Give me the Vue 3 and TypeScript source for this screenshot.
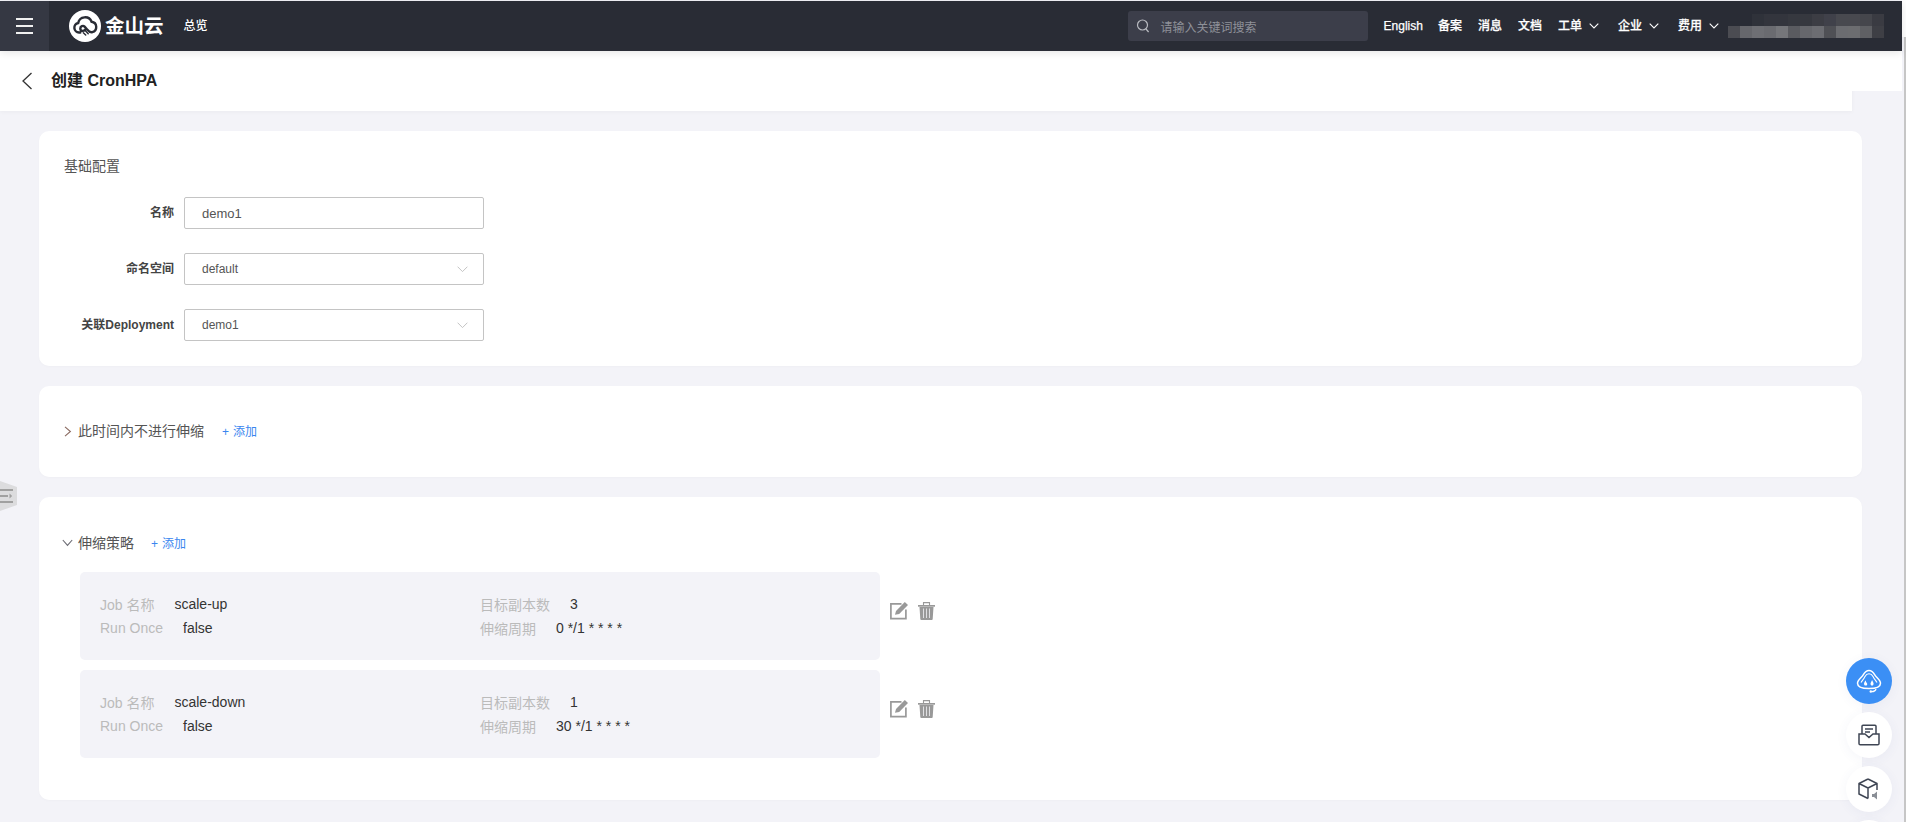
<script setup lang="ts">
interface Field { label: string; value: string; select: boolean }
interface Job { name: string; replicas: string; once: string; cron: string }

const navPlain: string[] = ['English', '备案', '消息', '文档']
const navMenu: string[] = ['工单', '企业', '费用']
const fields: Field[] = [
  { label: '名称', value: 'demo1', select: false },
  { label: '命名空间', value: 'default', select: true },
  { label: '关联Deployment', value: 'demo1', select: true },
]
const jobs: Job[] = [
  { name: 'scale-up', replicas: '3', once: 'false', cron: '0 */1 * * * *' },
  { name: 'scale-down', replicas: '1', once: 'false', cron: '30 */1 * * * *' },
]
const topCells = ['#2f323a', '#33353d', '#33353d', '#36383f', '#36383f', '#3c3d44', '#40414a', '#48494f', '#48494f', '#45464c', '#3a3b42']
const bottomCells = ['#4b4c52', '#66676c', '#6e6f74', '#6a6b70', '#75767a', '#5a5b60', '#66676c', '#6c6d72', '#4f5055', '#6b6c70', '#6c6d70', '#5f6064', '#3e3f45', '#3b3c42']
</script>

<template>
  <div class="app">
    <div class="main">
      <header class="topbar">
        <button class="menu-btn" aria-label="menu">
          <span></span><span></span><span></span>
        </button>
        <div class="logo">
          <svg class="logo-mark" width="32" height="32" viewBox="0 0 32 32">
            <circle cx="16" cy="16" r="16" fill="#fff" />
            <path d="M11.300 22.500H10a4.800 4.800 0 0 1-.8-9.500 7 7 0 0 1 13.400-1.200 5.300 5.300 0 0 1 .6 10.400c-2.400.4-3.800-1.200-5.300-3l-2.300-2.600c-1.500-1.500-4.300-.4-4.300 1.800 0 1.400 1.100 2.500 2.400 2.500 1.100 0 1.900-.6 2.600-1.300" fill="none" stroke="#292c35" stroke-width="2.400" stroke-linecap="round" />
            <path d="M16.200 20.500l3 3.200M14.300 22.800l2.400 2.200" fill="none" stroke="#292c35" stroke-width="1.500" stroke-linecap="round" />
          </svg>
          <span class="logo-text">金山云</span>
        </div>
        <a class="overview">总览</a>
        <div class="spacer"></div>
        <div class="search">
          <svg width="14" height="16" viewBox="0 0 14 16">
            <circle cx="6.500" cy="7" r="5" fill="none" stroke="#b8bac0" stroke-width="1.200" />
            <path d="M10 11l2.600 3" fill="none" stroke="#b8bac0" stroke-width="1.200" />
          </svg>
          <span>请输入关键词搜索</span>
        </div>
        <nav class="nav">
          <a v-for="item in navPlain" :key="item" class="nav-item">{{ item }}</a>
          <a v-for="item in navMenu" :key="item" class="nav-item nav-menu">
            {{ item }}
            <svg width="10" height="6" viewBox="0 0 10 6"><path d="M.7.7L5 5l4.300-4.300" fill="none" stroke="#fff" stroke-width="1.100" /></svg>
          </a>
        </nav>
        <svg class="mosaic" width="156" height="24" viewBox="0 0 156 24">
          <rect v-for="(c, i) in topCells" :key="'t' + i" :x="24 + i * 12" y="0" width="12.500" height="12" :fill="c" />
          <rect v-for="(c, i) in bottomCells" :key="'b' + i" :x="i * 12" y="12" width="12.500" height="12" :fill="c" />
        </svg>
      </header>

      <div class="title-wrap">
        <div class="title-bar">
          <svg class="back" width="12" height="18" viewBox="0 0 12 18"><path d="M9.500 1L1 9l8.500 8" fill="none" stroke="#333" stroke-width="1.300" /></svg>
          <h1>创建 CronHPA</h1>
        </div>
        <div class="title-stub"></div>
      </div>

      <main class="content">
        <section class="card card-basic">
          <h2 class="section-title">基础配置</h2>
          <div class="form">
            <div v-for="f in fields" :key="f.label" class="form-row">
              <label>{{ f.label }}</label>
              <div class="control" :class="{ plain: !f.select }">
                <span>{{ f.value }}</span>
                <svg v-if="f.select" width="11" height="7" viewBox="0 0 11 7"><path d="M.6.7l4.900 4.900L10.400.7" fill="none" stroke="#c4c4c4" stroke-width="1" /></svg>
              </div>
            </div>
          </div>
        </section>

        <section class="card card-fold">
          <div class="fold-head">
            <svg class="fold-icon" width="8" height="11" viewBox="0 0 8 11"><path d="M1 .8l5.400 4.700L1 10.200" fill="none" stroke="#8a6a60" stroke-width="1.100" /></svg>
            <span class="fold-title">此时间内不进行伸缩</span>
            <a class="add add-long"><i>+</i>添加</a>
          </div>
        </section>

        <section class="card card-policy">
          <div class="fold-head">
            <svg class="fold-icon open" width="11" height="8" viewBox="0 0 11 8"><path d="M.8 1l4.700 5.400L10.200 1" fill="none" stroke="#6a6a72" stroke-width="1.100" /></svg>
            <span class="fold-title">伸缩策略</span>
            <a class="add"><i>+</i>添加</a>
          </div>
          <div class="jobs">
            <div v-for="job in jobs" :key="job.name" class="job-line">
              <div class="job">
                <div class="pair"><span class="k">Job 名称</span><span class="v">{{ job.name }}</span></div>
                <div class="pair"><span class="k">目标副本数</span><span class="v">{{ job.replicas }}</span></div>
                <div class="pair"><span class="k">Run Once</span><span class="v">{{ job.once }}</span></div>
                <div class="pair"><span class="k">伸缩周期</span><span class="v">{{ job.cron }}</span></div>
              </div>
              <div class="actions">
                <svg width="18" height="18" viewBox="0 0 18 18">
                  <path d="M11.500 1.800H.9v14.800h15V7.500" fill="none" stroke="#999" stroke-width="1.700" />
                  <path d="M5 12.800l1-3.800L14.800 0 18 3l-8.800 9z" fill="#999" />
                </svg>
                <svg width="17" height="18" viewBox="0 0 17 18">
                  <path d="M5.500 3.200V.6h6v2.600" fill="none" stroke="#999" stroke-width="1.100" />
                  <path d="M0 3h17v1.700H0z" fill="#999" />
                  <path d="M1.500 5h14l-.8 12a1 1 0 0 1-1 1H3.300a1 1 0 0 1-1-1z" fill="#999" />
                  <path d="M5.500 6.500v9.500M8.500 6.500v9.500M11.500 6.500v9.500" stroke="#dfdfe2" stroke-width="1" />
                </svg>
              </div>
            </div>
          </div>
        </section>
      </main>
    </div>
    <div class="scroll"><div class="thumb"></div></div>

    <div class="side-handle">
      <svg width="14" height="16" viewBox="0 0 14 16">
        <path d="M0 2h13M0 8h8M0 14h13" stroke="#a0a0a0" stroke-width="2" />
        <path d="M9.500 5.500l2.700 2.500-2.700 2.500z" fill="#a0a0a0" />
      </svg>
    </div>

    <div class="floats">
      <a class="float blue">
        <svg width="26" height="24" viewBox="0 0 26 24">
          <path d="M13 1.500c2.800 0 4.400 1.900 5.800 4.400 1.500 2.600 5.700 5.300 5.700 8.300 0 3.600-4.400 5.300-11.500 5.300S1.500 17.800 1.500 14.200c0-3 4.200-5.700 5.700-8.300C8.600 3.400 10.200 1.500 13 1.500z" fill="none" stroke="#fff" stroke-width="1.500" />
          <path d="M5 13.500c1.300-2 3-3.800 4-6 .8-1.500 2-2.700 4-2.700s3.200 1.200 4 2.700c1 2.200 2.700 4 4 6" fill="none" stroke="#fff" stroke-width="1.100" />
          <path d="M8.800 16.500c-1-.9-1-2.400-.2-3.500l.9-1.800.6 1.800 1 1.500c.4 1-.1 1.700-.7 2zM15.300 16.500c-1-.9-1-2.400-.2-3.500l1-2 .9 2c.8 1.100.8 2.600-.2 3.500z" fill="#fff" />
          <path d="M20 20c-.4 1.700-2 2.600-4.500 2.600" fill="none" stroke="#fff" stroke-width="1.300" />
          <circle cx="14.800" cy="22.500" r="1.200" fill="#fff" />
        </svg>
      </a>
      <a class="float">
        <svg width="22" height="22" viewBox="0 0 22 22">
          <path d="M4 10V2.200a1 1 0 0 1 1-1h12a1 1 0 0 1 1 1V10" fill="none" stroke="#3f4654" stroke-width="1.500" />
          <path d="M7 5h8M7 8h5" stroke="#3f4654" stroke-width="1.400" />
          <path d="M1 10h6l4 3.500 4-3.500h6v9.500a1.300 1.300 0 0 1-1.300 1.300H2.300A1.300 1.300 0 0 1 1 19.500z" fill="none" stroke="#3f4654" stroke-width="1.500" />
        </svg>
      </a>
      <a class="float">
        <svg width="22" height="22" viewBox="0 0 22 22">
          <path d="M10 1L1 5.500V16l9 4.500M10 1l9 4.500V12M1 5.500L10 10l9-4.500M10 10v10.500" fill="none" stroke="#3f4654" stroke-width="1.500" stroke-linejoin="round" />
          <path d="M14 16h2l3-2.500v8L16 19h-2z" fill="#8a8e96" />
        </svg>
      </a>
      <a class="float"></a>
    </div>
  </div>
</template>

<style>
html, body { margin: 0; background: #f3f3f8; overflow: hidden; }
</style>

<style scoped>
.app {
  position: relative;
  display: flex;
  width: 1906px;
  height: 822px;
  overflow: hidden;
  background: #f3f3f8;
  font-family: "Liberation Sans", "Noto Sans CJK SC", sans-serif;
  color: #333;
}
.main { width: 1902px; flex: none; display: flex; flex-direction: column; }
.scroll { width: 4px; flex: none; background: linear-gradient(#fff 37px, #f3f3f8 37px); }
.thumb { margin: 37px 0 0 2px; width: 2px; height: 785px; background: #c6c6c6; }

.topbar {
  position: relative;
  z-index: 2;
  margin-top: 1px;
  height: 50px;
  flex: none;
  display: flex;
  align-items: center;
  background: #292c35;
  color: #fff;
  box-shadow: 0 2px 8px rgba(0, 0, 0, .1);
}
.menu-btn {
  width: 49px;
  height: 50px;
  padding: 0;
  border: 0;
  background: #353843;
  display: flex;
  flex-direction: column;
  align-items: center;
  justify-content: center;
  gap: 5px;
}
.menu-btn span { width: 17px; height: 2px; background: #f0f0f0; }
.logo { margin-left: 20px; display: flex; align-items: center; gap: 4px; }
.logo-mark { display: block; }
.logo-text { font-size: 19.500px; line-height: 32px; font-weight: 700; white-space: nowrap; }
.overview { margin-left: 20px; font-size: 12px; line-height: 20px; font-weight: 500; }
.spacer { flex: 1; }
.search {
  width: 240px;
  height: 30px;
  box-sizing: border-box;
  padding-left: 8px;
  display: flex;
  align-items: center;
  gap: 11px;
  border-radius: 3px;
  background: #3c3e4a;
  color: #8f9199;
  font-size: 12px;
}
.nav { margin-left: 16px; display: flex; align-items: center; gap: 15px; }
.nav-item { font-size: 12px; line-height: 20px; font-weight: 500; white-space: nowrap; -webkit-text-stroke: .25px #fff; }
.nav-item + .nav-item:not(.nav-menu) { margin-right: 1px; }
.nav-menu { display: flex; align-items: center; gap: 7px; margin-right: 4px; }
.mosaic { margin-left: 5px; margin-right: 18px; display: block; }

.title-wrap { display: flex; align-items: flex-start; flex: none; }
.title-bar {
  width: 1852px;
  height: 60px;
  flex: none;
  box-sizing: border-box;
  padding-left: 22px;
  display: flex;
  align-items: center;
  gap: 17px;
  background: #fff;
  box-shadow: 0 1px 4px rgba(0, 0, 0, .04);
}
.title-stub { flex: 1; height: 40px; background: #fff; }
.back { display: block; }
h1 { margin: 0; font-size: 16px; line-height: 24px; font-weight: 700; color: #222; }

.content {
  padding: 20px 0 0 39px;
  display: flex;
  flex-direction: column;
  gap: 20px;
}
.card {
  width: 1823px;
  box-sizing: border-box;
  background: #fff;
  border-radius: 10px;
  box-shadow: 0 1px 3px rgba(0, 0, 0, .02);
}
.card-basic { padding: 25px; }
.card-fold { padding: 35px 25px 36px; }
.card-policy { padding: 36px 0 42px 23px; }
.section-title { margin: 0; font-size: 14px; line-height: 20px; font-weight: 400; color: #555; }
.form { margin-top: 21px; display: flex; flex-direction: column; gap: 24px; }
.form-row { display: flex; align-items: center; gap: 10px; }
.form-row label { width: 110px; text-align: right; font-size: 12px; line-height: 20px; font-weight: 700; color: #444; white-space: nowrap; }
.control {
  width: 300px;
  height: 32px;
  box-sizing: border-box;
  padding: 0 15px 0 17px;
  display: flex;
  align-items: center;
  justify-content: space-between;
  border: 1px solid #c4c4c4;
  border-radius: 2px;
  font-size: 12px;
  color: #555;
}
.control.plain { font-size: 13px; }
.fold-head { display: flex; align-items: center; height: 20px; font-size: 14px; color: #555; }
.fold-icon { flex: none; margin-right: 6px; }
.fold-icon.open { margin-right: 5px; }
.fold-title { line-height: 20px; white-space: nowrap; }
.add { margin-left: 17px; margin-top: 1px; display: flex; align-items: center; gap: 6px; font-size: 12px; line-height: 20px; color: #3a86ef; }
.add i { font-style: normal; width: 5px; }
.add-long { margin-left: 18px; }
.jobs { margin: 19px 0 0 18px; display: flex; flex-direction: column; gap: 10px; }
.job-line { display: flex; align-items: center; gap: 10px; }
.job {
  width: 800px;
  height: 88px;
  box-sizing: border-box;
  padding: 20px;
  display: grid;
  grid-template-columns: 380px 1fr;
  grid-auto-rows: 24px;
  background: #f3f3f8;
  border-radius: 5px;
  font-size: 14px;
}
.pair { display: flex; align-items: center; gap: 20px; white-space: nowrap; }
.k { color: #bbb; }
.v { color: #333; }
.actions { display: flex; gap: 10px; margin-bottom: 10px; }
.actions svg { display: block; }

.side-handle {
  position: absolute;
  left: 0;
  top: 481px;
  width: 17px;
  height: 30px;
  display: flex;
  align-items: center;
  background: #dcdcde;
  clip-path: polygon(0 0, 100% 20%, 100% 80%, 0 100%);
}
.floats {
  position: absolute;
  left: 1846px;
  top: 658px;
  display: flex;
  flex-direction: column;
  gap: 8px;
}
.float {
  width: 46px;
  height: 46px;
  flex: none;
  display: flex;
  align-items: center;
  justify-content: center;
  border-radius: 50%;
  background: #fff;
  box-shadow: 0 2px 12px rgba(60, 80, 160, .06);
}
.float.blue { background: #3b8ff5; }
</style>
